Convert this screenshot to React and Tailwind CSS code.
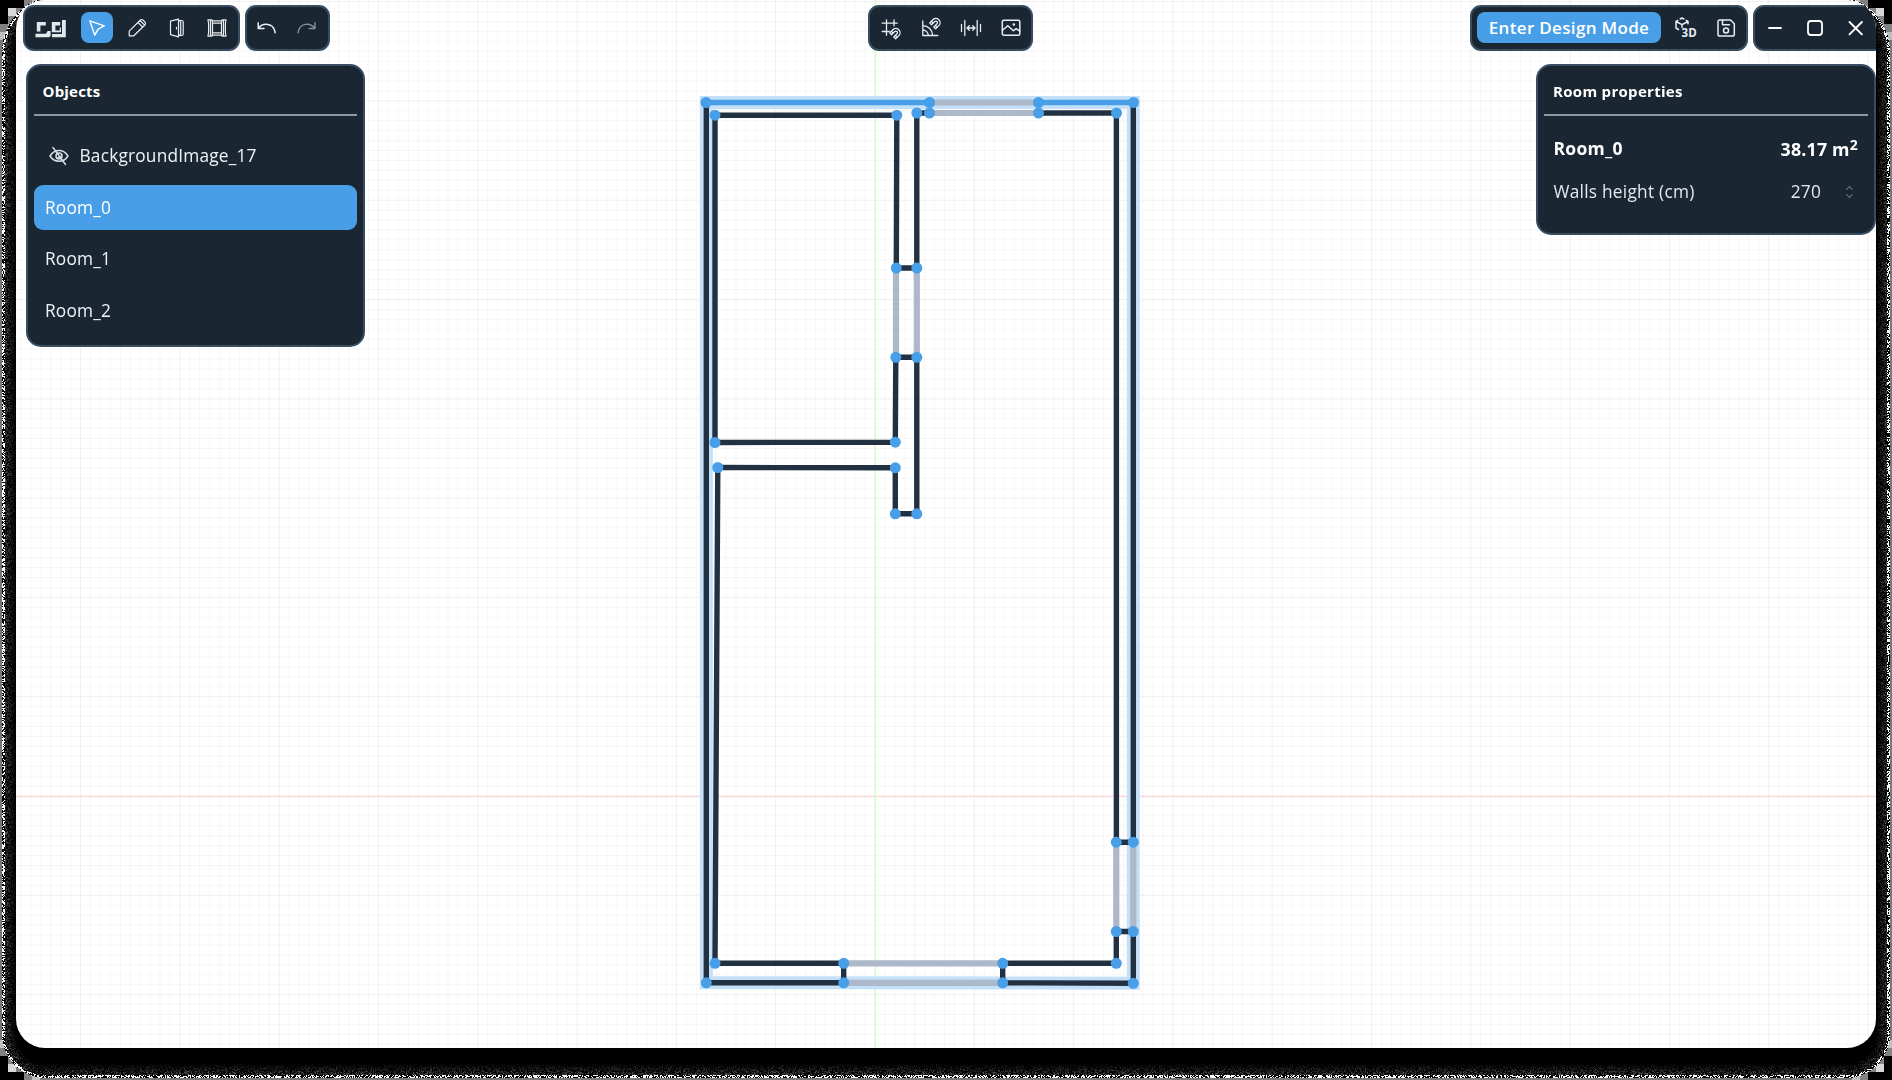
import { useLayoutEffect, useRef } from "react";

const W = 1892;
const H = 1080;

// Signed distance to a rounded rectangle: negative inside.
function roundedDistance(x, y, l, t, r, b, radius) {
  const qx = Math.abs(x - (l + r) / 2) - (r - l) / 2 + radius;
  const qy = Math.abs(y - (t + b) / 2) - (b - t) / 2 + radius;
  return (
    Math.hypot(Math.max(qx, 0), Math.max(qy, 0)) +
    Math.min(Math.max(qx, qy), 0) -
    radius
  );
}

function WindowShadow() {
  const ref = useRef(null);
  useLayoutEffect(() => {
    const ctx = ref.current.getContext("2d");
    const img = ctx.createImageData(W, H);
    let seed = 7;
    const rand = () => {
      seed = (seed * 1664525 + 1013904223) >>> 0;
      return seed / 4294967296;
    };
    for (let y = 0; y < H; y++) {
      for (let x = 0; x < W; x++) {
        if (x > 60 && x < W - 60 && y < 1044) continue;
        const s = -roundedDistance(x + 0.5, y + 0.5, 2, -4, 1890, 1078, y < 540 ? 56 : 44);
        let v;
        if (s > 14) v = 0;
        else if (s > 2.6) v = Math.pow(rand(), 2) * 255 * 0.5 * (1 - s / 14.5);
        else if (s > 0) v = rand() < 0.5 ? 255 : 0;
        else {
          const bx = Math.min(x, W - 1 - x) >> 3;
          const by = Math.min(y, H - 1 - y) >> 3;
          const k = bx + by;
          v = k <= 2 && !(bx === 1 && by === 1) ? 0 : bx === 1 && by === 1 ? 215 : k === 3 ? 130 : k === 4 ? 190 : 120;
        }
        const i = (y * W + x) * 4;
        img.data[i] = img.data[i + 1] = img.data[i + 2] = v;
        img.data[i + 3] = 255;
      }
    }
    ctx.putImageData(img, 0, 0);
  }, []);
  return <canvas ref={ref} width={W} height={H} className="absolute inset-0" />;
}

const STEP = 9.93;
const range = (from, to) => Array.from({ length: to - from + 1 }, (_, i) => from + i);

function Grid() {
  return (
    <g>
      {range(-87, 101).map((n) => (
        <path key={n} d={`M${875 + n * STEP} 0V1048`} stroke="#000" strokeOpacity={n % 10 === 0 ? 0.06 : 0.035} />
      ))}
      {range(-81, 26).map((n) => (
        <path key={n} d={`M16 ${796 + n * STEP}H1876`} stroke="#000" strokeOpacity={n % 10 === 0 ? 0.06 : 0.035} />
      ))}
      <path d="M16 796.5H1876" stroke="#ffd9d9" strokeWidth="1.4" />
      <path d="M875.3 0V1048" stroke="#d3ffcb" strokeWidth="1.6" />
    </g>
  );
}

const nodes = [
  [706, 102.5], [929.5, 102.5], [1038.5, 102.5], [1133.5, 102.5],
  [715, 115.2], [896.8, 115.2], [916.8, 113], [929.5, 113], [1038.5, 113], [1116.5, 113],
  [896.3, 268], [916.8, 268], [895.8, 357.3], [916.8, 357.3],
  [715, 442.5], [895.3, 442.2], [717.8, 467.5], [895.3, 467.8],
  [895.3, 513.8], [916.8, 513.8],
  [1116.3, 842.2], [1133.3, 842.2], [1116.3, 931.5], [1133.3, 931.5],
  [715, 963.3], [843.7, 963.3], [1002.7, 963.3], [1116.3, 963.3],
  [706.3, 982.8], [843.7, 982.8], [1002.7, 982.8], [1133.3, 983.3],
];

function FloorPlan() {
  return (
    <svg width={W} height={H} viewBox="0 0 1892 1080" className="absolute inset-0">
      <Grid />
      <path d="M706.3 102.5H1133.3V983.2L706.3 982.8Z" fill="none" stroke="#c3e0f8" strokeWidth="13" />
      <g fill="none" stroke="#213141" strokeWidth="5.4">
        <path d="M706.3 102.5V982.8H843.7V963.3H715L717.8 467.5L895.3 467.8V513.8H916.8V357.3H895.8L895.3 442.2L715 442.5V115.2H896.8L896.3 268H916.8V113H929.5" />
        <path d="M1038.5 113H1116.4V842.2H1133.3V102.5" />
        <path d="M1002.7 963.3V982.8L1133.3 983.3V931.5H1116.3V963.3H1002.7" />
      </g>
      <g fill="none" stroke="#adb9ca" strokeWidth="6.2">
        <path d="M929.5 102.5H1038.5M929.5 113H1038.5M896 268V357.3M916.8 268V357.3M1116.3 842.2V931.5M1133.3 842.2V931.5M843.7 963.3H1002.7M843.7 982.8H1002.7" />
      </g>
      <path d="M706.3 102.5H929.5M1038.5 102.5H1133.3" stroke="#489fe8" strokeWidth="5.6" />
      {nodes.map(([x, y]) => (
        <circle key={`${x}-${y}`} cx={x} cy={y} r="5.5" fill="#489fe8" />
      ))}
    </svg>
  );
}

function Icon({ children, className = "text-[#e8edf1]", sw = 1.2 }) {
  return (
    <svg width="24" height="24" viewBox="0 0 24 24" fill="none" stroke="currentColor" strokeWidth={sw} strokeLinecap="round" strokeLinejoin="round" className={className}>
      {children}
    </svg>
  );
}

function Tool({ active, children }) {
  return (
    <button className={`flex h-[31px] w-8 shrink-0 items-center justify-center rounded-[8px] ${active ? "bg-[#489fe8]" : ""}`}>
      {children}
    </button>
  );
}

function Bar({ className, children }) {
  return (
    <div className={`flex h-[46px] shrink-0 items-center rounded-[11px] border-2 border-[#384c62] bg-[#1a2733] ${className}`}>
      {children}
    </div>
  );
}

const Magnet = ({ x, y }) => (
  <g transform={`translate(${x} ${y}) rotate(45)`}>
    <path d="M-4.2 4V-.5a4.2 4.2 0 0 1 8.4 0V4H1.6V-.5a1.6 1.6 0 0 0-3.2 0V4ZM-4.2 1.8h2.6M1.6 1.8h2.6" />
  </g>
);

function TopBar() {
  return (
    <header className="flex pl-[6.5px] pt-[4.5px]">
      <Bar className="w-[217.5px] pl-[10.5px]">
        <svg width="32" height="20" viewBox="0 0 32 20" className="mr-[14px] shrink-0">
          <g fill="#e3e8ec">
            <path d="M1.8 4H10.8V7.4H5.4V13.6H1.8ZM.5 15.8H11L12.6 13H15.6V18L14.2 19.3H.5Z" />
            <path d="M16.8 4H25.2V7.4H20.4V12.4H24.8V9.6H26V14.200H16.800ZM27 2H30.800V19.300H17V16H27Z" />
          </g>
        </svg>
        <div className="flex gap-2">
          <Tool active><Icon sw={1.4} className="text-white"><path d="m4.8 4.8 14.5 5-6.2 3.3-3.3 6.1Z" /></Icon></Tool>
          <Tool><Icon><path d="M4.2 19.8v-4.6L15.4 4q1.3-1 2.5 0l2.2 2.2q1 1.2 0 2.5L8.8 19.8ZM13 6.5l4.7 4.7M15 4.5l4.7 4.7" /></Icon></Tool>
          <Tool><Icon><path d="M5.5 5.2 13.5 3.2v17.6L5.5 18.6ZM13.500 4.500h3.200q1.500 0 1.500 1.500v12q0 1.500-1.500 1.500h-3.200M13.500 4.500q2.200 0 2.200 2v11q0 2-2.200 2M11.500 11.400v1.600" /></Icon></Tool>
          <Tool><Icon sw={1.2}><path d="M3 3.800h4l.5 3.200v10L7 20.200H3l.6-3.700v-9ZM21 3.800h-4l-.5 3.200v10l.5 3.200h4l-.6-3.700v-9ZM7.200 4.900h9.600M7.500 7.200h9M7.500 16.800h9M7.200 19.100h9.600M5.500 4v16M18.500 4v16" /></Icon></Tool>
        </div>
      </Bar>
      <Bar className="ml-[4.500px] w-[85.500px] gap-2 pl-[4px]">
        <Tool><Icon sw={1.5}><path d="M3.200 6.800v5.700H9M3.700 12c3.800-5.200 14.800-6 16.500 4.800" /></Icon></Tool>
        <Tool><Icon sw={1.4} className="text-[#83909c]"><path d="M20 6.800v5.700h-5.800M19.500 12C15.700 6.800 4.700 6 3 16.800" /></Icon></Tool>
      </Bar>
      <Bar className="ml-[537.500px] w-[165.500px] gap-2 pl-[5px]">
        <Tool><Icon sw={1.3}><path d="M3.200 7.200h15M3.200 15.500h7M7.500 3.800v15.500M15 3.800v6" /><Magnet x={16.500} y={17} /></Icon></Tool>
        <Tool><Icon sw={1.3}><path d="M3.800 5v14.500h15M3.800 9.700a9.800 9.800 0 0 1 9.800 9.800M3.800 14a5.500 5.500 0 0 1 5.500 5.500" /><Magnet x={16.500} y={7} /></Icon></Tool>
        <Tool><Icon sw={1.3}><path d="M2.500 8.500v7M5.800 4.500v15M18.200 4.500v15M21.500 8.500v7M8.300 12h7.400M10.300 9.800 8 12l2.300 2.200M13.700 9.800 16 12l-2.300 2.200" /></Icon></Tool>
        <Tool><Icon sw={1.5}><rect x="3.300" y="4.200" width="17.500" height="15" rx="1.500" /><path d="m3.500 14.200 5.300-4.500 5.600 5 2.800-2 3.500 2.500" /><circle cx="14.800" cy="8.500" r=".6" /></Icon></Tool>
      </Bar>
      <Bar className="ml-[437px] w-[278px] pl-[5px]">
        <button className="h-[31px] w-[184px] shrink-0 whitespace-nowrap rounded-[8px] bg-[#489fe8] text-[17px] font-semibold leading-[30px] tracking-[0.330px] text-white">Enter Design Mode</button>
        <div className="ml-[8.500px] flex gap-2">
          <Tool>
            <Icon sw={1.5}>
              <path d="m2 5.500 1.800-1M6.200 3l1.800-1 1.900 1M12.300 4.500l1.700 1v2.200M2 5.500v6.500l2.500 1.500M2 5.500l6 3.200 6-3.200M8 8.700v2.500" />
              <text x="7.500" y="20.500" fill="currentColor" stroke="none" className="font-['Open_Sans',sans-serif] text-[11.500px] font-bold">3D</text>
            </Icon>
          </Tool>
          <Tool><Icon sw={1.5}><path d="M4 5.800Q4 4 5.800 4h10.700L20.300 7.800v10.400q0 1.800-1.800 1.800H5.800Q4 20 4 18.200ZM8.500 4v4.700h7" /><circle cx="12" cy="14.500" r="2.500" /></Icon></Tool>
        </div>
      </Bar>
      <Bar className="ml-[5px] w-[132px] gap-2 pl-[3.500px]">
        <Tool><Icon sw={1.800} className="text-white"><path d="M6 12h12" /></Icon></Tool>
        <Tool><Icon sw={1.800} className="text-white"><rect x="5" y="5" width="14" height="14" rx="3" /></Icon></Tool>
        <Tool><Icon sw={1.900} className="text-white"><path d="m6.500 6 12.400 12.400M18.900 6 6.500 18.400" /></Icon></Tool>
      </Bar>
    </header>
  );
}

function Panel({ title, className, titleClass = "", children }) {
  return (
    <section className={`shrink-0 rounded-[15px] border-2 border-[#384c62] bg-[#1a2733] ${className}`}>
      <h2 className={`h-[50px] border-b-2 border-[#8d98a1] pl-[9px] pt-[13px] text-[15px] font-bold leading-[24px] text-white ${titleClass}`}>{title}</h2>
      {children}
    </section>
  );
}

function ObjectRow({ name, selected, hidden }) {
  return (
    <li className={`flex h-[45px] items-center rounded-[9px] pl-[11.500px] ${selected ? "bg-[#489fe8] text-white" : "text-[#f0f3f5]"}`}>
      {hidden && (
        <span className="ml-[2px] mr-[8.500px]">
          <Icon sw={1.500} className="text-[#d5dce2]">
            <path d="M3 12c4.500-7.500 13.500-7.500 18 0c-4.500 7-13.500 7-18 0ZM6 3.500l12.500 17" />
            <circle cx="12" cy="12" r="3" />
            <path d="m10 14.500 3.500-2" />
          </Icon>
        </span>
      )}
      {name}
    </li>
  );
}

export default function App() {
  return (
    <div className="relative h-[1080px] w-[1892px] overflow-hidden bg-black font-['Open_Sans','Noto_Sans',sans-serif] text-[17.300px] tracking-[0.200px]">
      <WindowShadow />
      <div className="relative mx-4 h-[1048px] overflow-hidden rounded-[29px] bg-white">
        <div className="absolute left-[-16px] top-0">
          <FloorPlan />
        </div>
        <div className="relative">
          <TopBar />
          <main className="flex items-start pl-[9.500px] pt-[13.500px]">
            <Panel title="Objects" className="h-[283px] w-[339.500px] px-[6px]">
              <ul className="flex flex-col gap-[6.700px] pt-[17.500px]">
                <ObjectRow name="BackgroundImage_17" hidden />
                <ObjectRow name="Room_0" selected />
                <ObjectRow name="Room_1" />
                <ObjectRow name="Room_2" />
              </ul>
            </Panel>
            <Panel title="Room properties" className="ml-[1171px] h-[171px] w-[340px] px-[6px]" titleClass="tracking-[0.300px]">
              <div className="flex items-center justify-between pl-[9.500px] pr-[10px] pt-[17.500px] text-[17.500px] font-bold leading-[26px] text-white">
                <span className="tracking-[0.300px]">Room_0</span>
                <span className="relative top-[2px] text-[17.800px]">38.17 m<span className="relative -top-[6px] text-[14px]">2</span></span>
              </div>
              <div className="flex items-center pl-[9.500px] pt-[17px] leading-[26px] text-[#e3e8ec]">
                <span className="tracking-[0.250px]">Walls height (cm)</span>
                <span className="ml-auto mr-[24px]">270</span>
                <svg width="9" height="14" viewBox="0 0 9 14" fill="none" stroke="#66727d" strokeWidth="1.200" className="mr-[14px]">
                  <path d="M1.500 4.700 4.500 1.700 7.500 4.700M1.500 9.300l3 3 3-3" />
                </svg>
              </div>
            </Panel>
          </main>
        </div>
      </div>
    </div>
  );
}
